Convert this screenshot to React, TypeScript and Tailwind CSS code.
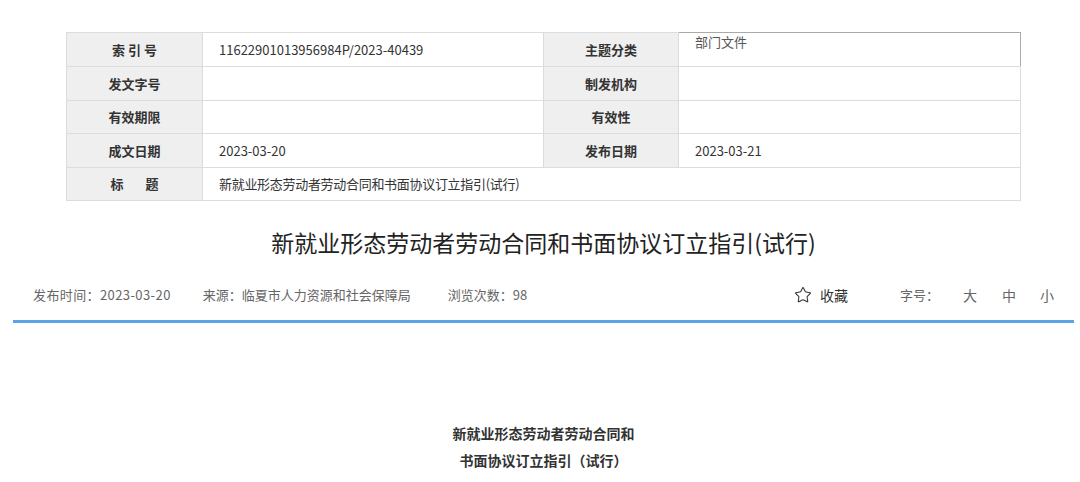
import { Star } from 'lucide-react';

type Cell = { label: string; value: string };

const rows: [Cell, Cell][] = [
  [
    { label: '索 引 号', value: '11622901013956984P/2023-40439' },
    { label: '主题分类', value: '部门文件' },
  ],
  [
    { label: '发文字号', value: '' },
    { label: '制发机构', value: '' },
  ],
  [
    { label: '有效期限', value: '' },
    { label: '有效性', value: '' },
  ],
  [
    { label: '成文日期', value: '2023-03-20' },
    { label: '发布日期', value: '2023-03-21' },
  ],
];

const title = '新就业形态劳动者劳动合同和书面协议订立指引(试行)';

const labelCls =
  'border border-[#dcdcdc] bg-[#efefef] text-center align-middle text-[13px] font-bold text-[#333]';
const valueCls = 'border border-[#dcdcdc] bg-white pl-4 align-middle text-[13px] text-[#333]';

export default function App() {
  return (
    <div
      className="min-h-[482px] bg-white text-[#333]"
      style={{ fontFamily: '"Microsoft YaHei", "Noto Sans CJK SC", sans-serif' }}
    >
      <div className="ml-[13px] w-[1061px] pt-[32px]">
        {/* Metadata table */}
        <table className="mx-[53px] w-[954px] table-fixed border-collapse">
          <colgroup>
            <col className="w-[136px]" />
            <col className="w-[341px]" />
            <col className="w-[135px]" />
            <col className="w-[342px]" />
          </colgroup>
          <tbody>
            {rows.map((row, i) => (
              <tr key={i} className={i === 2 ? 'h-[33px]' : 'h-[34px]'}>
                <td className={labelCls}>{row[0].label}</td>
                <td className={valueCls}>{row[0].value}</td>
                <td className={labelCls}>{row[1].label}</td>
                {i === 0 ? (
                  <td className="border border-[#dcdcdc] border-r-[#a9a9a9] border-t-[#a9a9a9] bg-white pl-4 pt-[1px] align-top text-[13px] leading-[16px] text-[#555]">
                    {row[1].value}
                  </td>
                ) : (
                  <td className={valueCls}>{row[1].value}</td>
                )}
              </tr>
            ))}
            <tr className="h-[33px]">
              <td className={labelCls}>
                <span className="inline-flex w-[48px] justify-between">
                  <span>标</span>
                  <span>题</span>
                </span>
              </td>
              <td className={`${valueCls} tracking-[-0.3px]`} colSpan={3}>
                {title}
              </td>
            </tr>
          </tbody>
        </table>

        {/* Heading */}
        <h1 className="mt-[27px] text-center text-[23px] leading-[28px] text-[#222]">{title}</h1>

        {/* Meta line */}
        <div className="mt-[27px] flex h-[24px] items-center px-5 text-[13px] text-[#666]">
          <span className="tracking-[0.4px]">发布时间：2023-03-20</span>
          <span className="ml-[32px]">来源：临夏市人力资源和社会保障局</span>
          <span className="ml-[37px]">浏览次数：98</span>
          <span className="ml-auto flex items-center text-[#333]">
            <Star className="h-[18px] w-[18px]" strokeWidth={1.4} />
            <span className="ml-[8px] text-[14px]">收藏</span>
          </span>
          <span className="ml-[52px]">字号：</span>
          <span className="ml-[24px] text-[14px]">大</span>
          <span className="ml-[25px] text-[14px]">中</span>
          <span className="ml-[24px] text-[14px]">小</span>
        </div>
        <div className="mt-[13px] h-[3px] w-full bg-[#5aa5ea]" />

        {/* Body */}
        <div
          className="pt-[98px] text-center text-[14px] font-bold leading-[27px] text-[#333]"
          style={{ fontFamily: '"Liberation Serif", "Noto Sans CJK SC", serif' }}
        >
          <p>新就业形态劳动者劳动合同和</p>
          <p>书面协议订立指引（试行）</p>
        </div>
      </div>
    </div>
  );
}
